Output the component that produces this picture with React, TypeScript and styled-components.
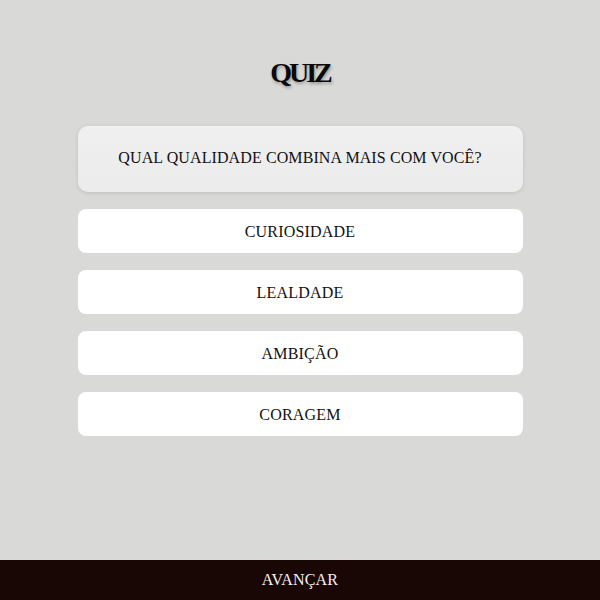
import React from "react";
import styled, { createGlobalStyle } from "styled-components";

const Global = createGlobalStyle`
  html, body { margin: 0; padding: 0; }
  body { background: #d9d9d8; font-family: "Liberation Serif", "DejaVu Serif", serif; color: #111; }
`;

const Page = styled.div`
  min-height: 100vh;
  display: flex;
  flex-direction: column;
`;

const Main = styled.main`
  flex: 1;
  display: flex;
  flex-direction: column;
  align-items: center;
  padding-top: 56px;
`;

const Title = styled.h1`
  margin: 0;
  font-size: 28px;
  line-height: 34px;
  font-weight: 700;
  letter-spacing: -3px;
  color: #0a0a0a;
  text-shadow: 1px 2px 3px rgba(0,0,0,0.3);
`;

const Stack = styled.div`
  width: 445px;
  margin-top: 36px;
  display: flex;
  flex-direction: column;
  gap: 17px;
`;

const Question = styled.div`
  height: 66px;
  border-radius: 10px;
  background: linear-gradient(180deg, #f0f0f0 0%, #ebebeb 100%);
  box-shadow: 0 1px 4px rgba(0,0,0,0.12);
  display: flex;
  align-items: center;
  justify-content: center;
  font-size: 16px;
  letter-spacing: 0.1px;
  padding-bottom: 2px;
  box-sizing: border-box;
`;

const Option = styled.button`
  height: 44px;
  border: none;
  border-radius: 8px;
  background: #ffffff;
  font-family: inherit;
  font-size: 16px;
  color: #111;
  letter-spacing: 0.2px;
  padding: 2px 0 0;
  cursor: pointer;
`;

const Footer = styled.footer`
  height: 40px;
  background: #190705;
  color: #f2f2f2;
  display: flex;
  align-items: center;
  justify-content: center;
  font-size: 16px;
  letter-spacing: 0.2px;
`;

const options = ["CURIOSIDADE", "LEALDADE", "AMBIÇÃO", "CORAGEM"];

export default function App() {
  return (
    <Page>
      <Global />
      <Main>
        <Title>QUIZ</Title>
        <Stack>
          <Question>QUAL QUALIDADE COMBINA MAIS COM VOCÊ?</Question>
          {options.map((o) => (
            <Option key={o}>{o}</Option>
          ))}
        </Stack>
      </Main>
      <Footer>AVANÇAR</Footer>
    </Page>
  );
}
